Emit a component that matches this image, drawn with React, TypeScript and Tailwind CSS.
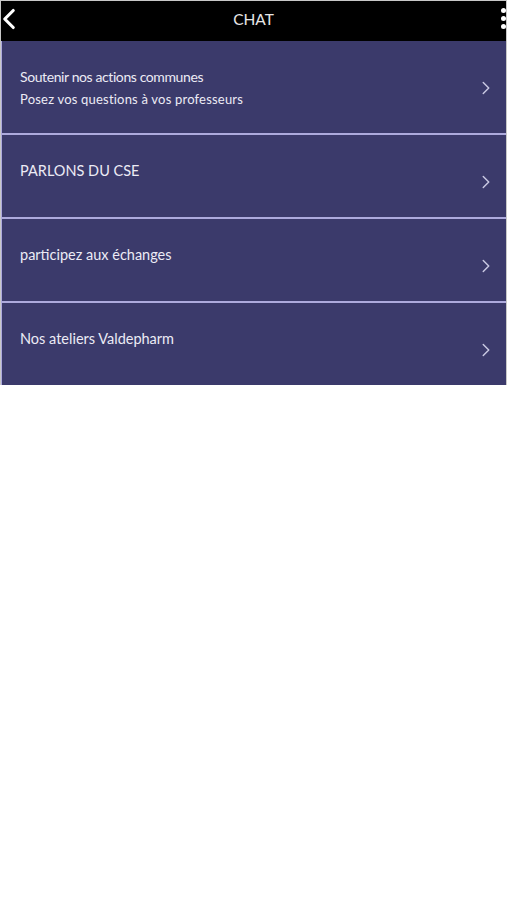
import { ChevronLeft, ChevronRight } from "lucide-react";

const rows = [
  {
    title: "Soutenir nos actions communes",
    subtitle: "Posez vos questions à vos professeurs",
  },
  { title: "PARLONS DU CSE" },
  { title: "participez aux échanges" },
  { title: "Nos ateliers Valdepharm" },
];

function ChatRow({ title, subtitle }: { title: string; subtitle?: string }) {
  return (
    <div
      className={`flex items-start justify-between bg-[#3b3a6b] pl-[18px] pr-[9px] ${
        subtitle ? "h-[92px]" : "h-[82px]"
      }`}
    >
      <div className="pt-[26px]">
        {subtitle ? (
          <>
            <p className="text-[14px] leading-[20px] tracking-[-0.4px] text-[#ecebf5]">
              {title}
            </p>
            <p className="mt-[2px] text-[13px] leading-[20px] tracking-[0.2px] text-[#ecebf5]">
              {subtitle}
            </p>
          </>
        ) : (
          <p className="text-[14.5px] leading-[20px] text-[#ecebf5]">{title}</p>
        )}
      </div>
      <ChevronRight
        className="mt-[36px] size-[22px] text-[#c9c8e2]"
        strokeWidth={1.6}
      />
    </div>
  );
}

export default function App() {
  return (
    <main
      className="min-h-[900px] bg-white"
      style={{ fontFamily: "Lato, 'Open Sans', sans-serif" }}
    >
      <div className="border-l border-r border-t border-[#c8c8c8]">
        <header className="relative flex h-[40px] items-center justify-center bg-black pb-[3px]">
          <ChevronLeft
            className="absolute left-[-9px] top-[1px] size-[34px] text-white"
            strokeWidth={2.2}
          />
          <h1 className="text-[15.5px] text-[#e6e6e6]">CHAT</h1>
          <div className="absolute right-[0px] top-[7px] flex flex-col gap-[3px]">
            <span className="block size-[5px] rounded-full bg-white" />
            <span className="block size-[5px] rounded-full bg-white" />
            <span className="block size-[5px] rounded-full bg-white" />
          </div>
        </header>
        <div className="flex flex-col gap-[2px] bg-[#adaadd] pl-[1px]">
          {rows.map((row) => (
            <ChatRow key={row.title} title={row.title} subtitle={row.subtitle} />
          ))}
        </div>
      </div>
    </main>
  );
}
